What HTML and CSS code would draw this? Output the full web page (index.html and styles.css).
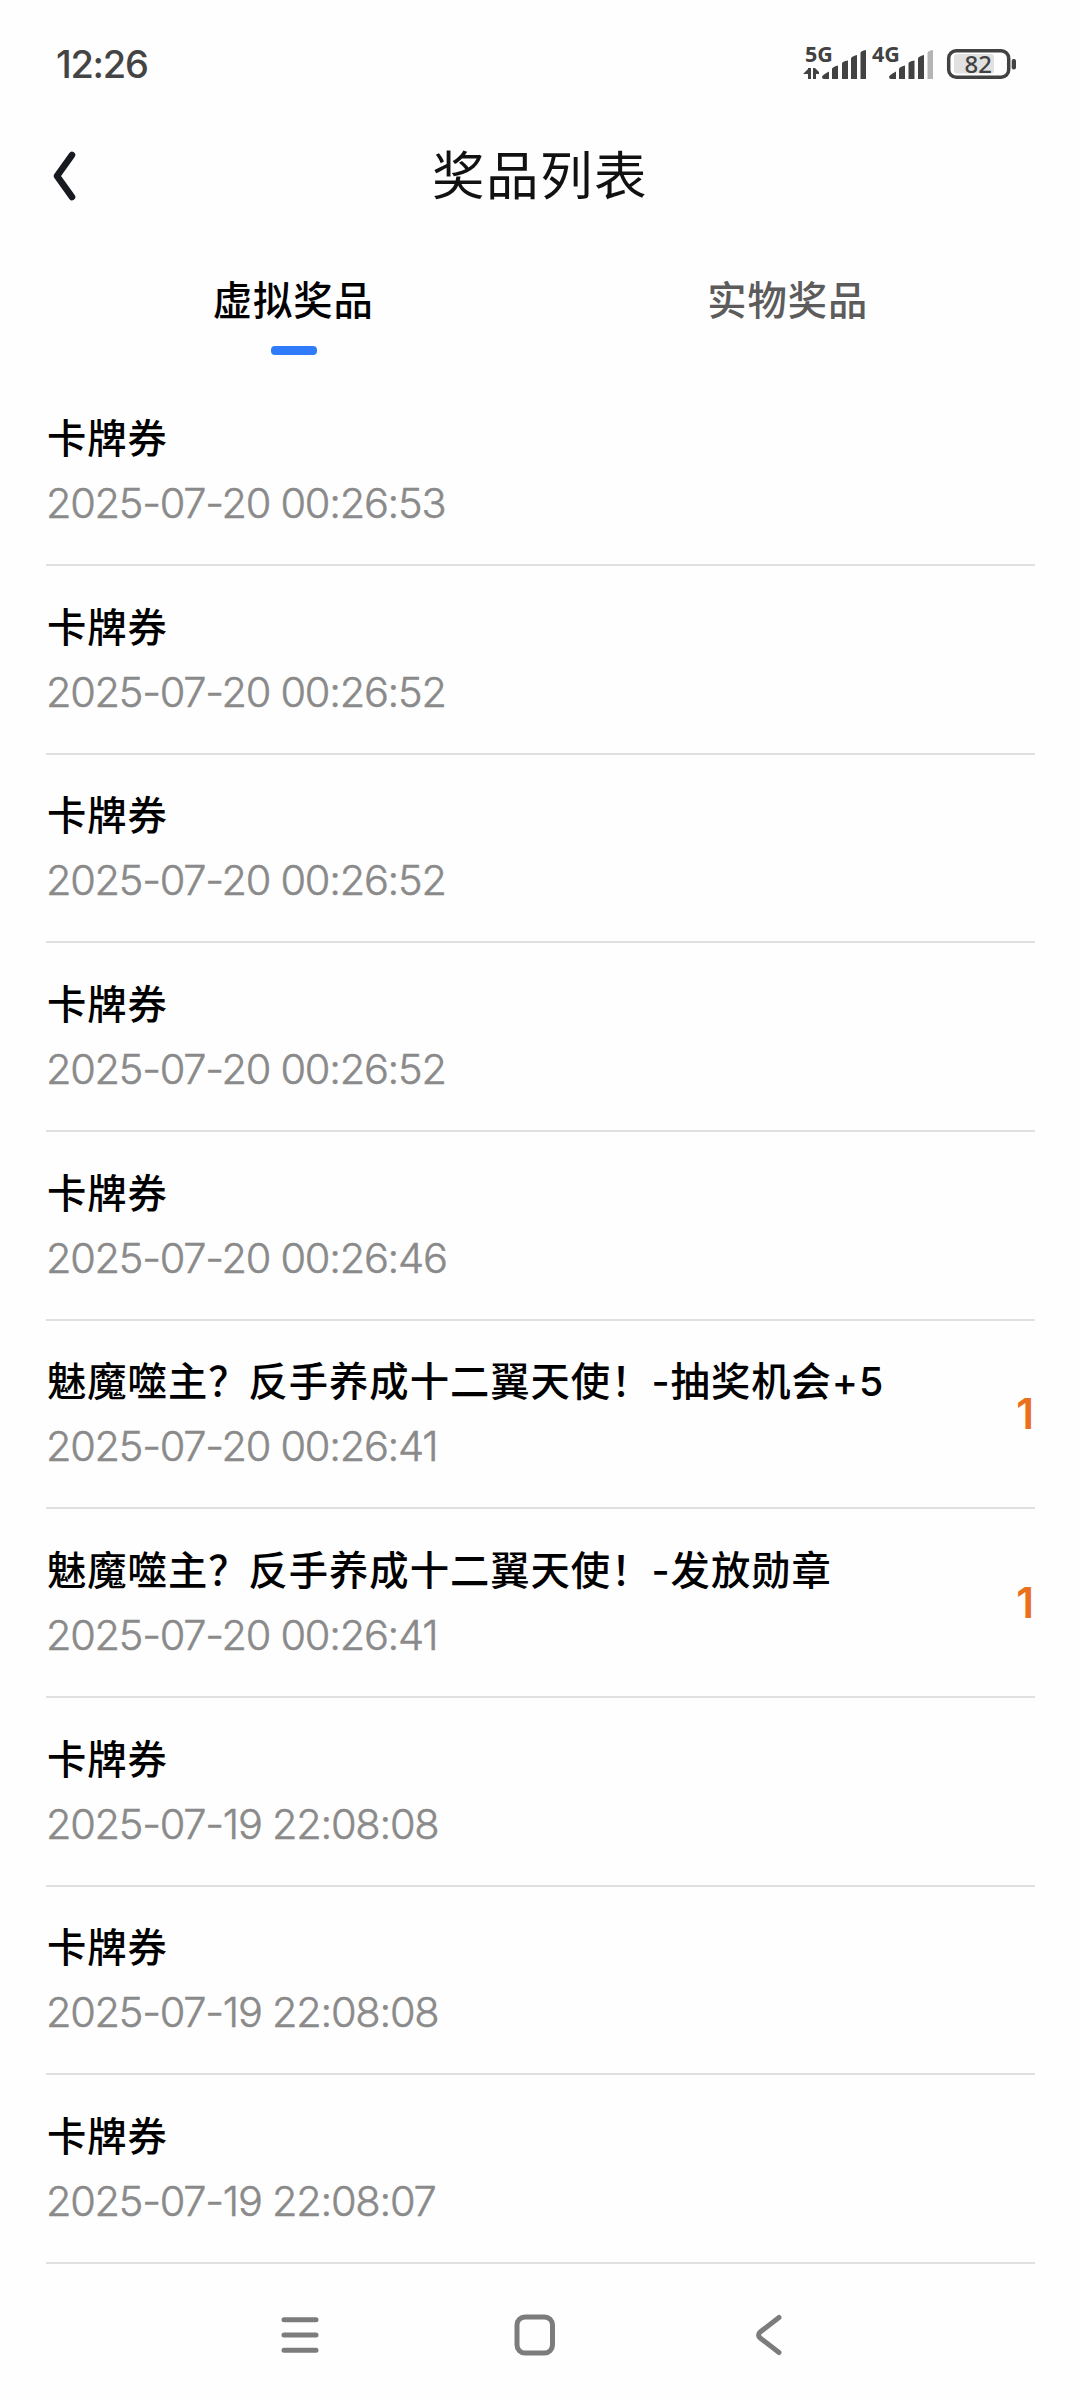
FILE: index.html
```html
<!DOCTYPE html>
<html lang="zh-CN">
    <head>
        <meta charset="utf-8">
        <title>奖品列表</title>
        <link rel="stylesheet" href="styles.css">
    </head>
    <body>
        <div class="status-bar">
            <span class="clock">12:26</span>
            <svg class="status-icons" width="220" height="60" viewBox="800 34 220 60">
                <!-- first sim -->
                <text class="net" x="805" y="62">5G</text>
                <path d="M803 74L808 69V68H811V79H808V74ZM813 68H815L819 72V74H816V79H813Z"/>
                <path d="M822 77Q822 75 829 71.500V79H824Q822 79 822 77ZM832 69Q832 67 838 65.500V79H832ZM842 63.500Q842 61.500 848 60.500V79H842ZM851 58.500Q851 56.500 857 55V79H851ZM860.500 53Q860.500 51 866 50V79H860.500Z"/>
                <!-- second sim -->
                <text class="net" x="872" y="62">4G</text>
                <path d="M889 77Q889 75 896 71.500V79H891Q889 79 889 77ZM899 69Q899 67 905 65.500V79H899ZM908.500 63.500Q908.500 61.500 914.500 60.500V79H908.500ZM918 58.500Q918 56.500 924 55V79H918Z"/>
                <path class="bar-off" d="M927.500 53Q927.500 51 933 50V79H927.500Z"/>
                <!-- battery -->
                <rect class="cell" x="948.700" y="50.700" width="60" height="26.600" rx="7.500"/>
                <rect class="charge" x="954" y="54" width="40" height="19.500" rx="3"/>
                <rect x="1011.700" y="59" width="4.300" height="10.500" rx="2"/>
                <text class="level" x="964.500" y="73">82</text>
            </svg>
        </div>

        <div class="header">
            <svg class="back" width="24" height="52" viewBox="0 0 24 52">
                <path d="M20 5L5 26L20 47"/>
            </svg>
            <h1>奖品列表</h1>
        </div>

        <div class="tabs">
            <div class="tab active">虚拟奖品</div>
            <div class="tab">实物奖品</div>
        </div>

        <div class="list">
            <div class="row">
                <div>
                    <div class="name">卡牌券</div>
                    <div class="time">2025-07-20 00:26:53</div>
                </div>
            </div>
            <div class="row">
                <div>
                    <div class="name">卡牌券</div>
                    <div class="time">2025-07-20 00:26:52</div>
                </div>
            </div>
            <div class="row">
                <div>
                    <div class="name">卡牌券</div>
                    <div class="time">2025-07-20 00:26:52</div>
                </div>
            </div>
            <div class="row">
                <div>
                    <div class="name">卡牌券</div>
                    <div class="time">2025-07-20 00:26:52</div>
                </div>
            </div>
            <div class="row">
                <div>
                    <div class="name">卡牌券</div>
                    <div class="time">2025-07-20 00:26:46</div>
                </div>
            </div>
            <div class="row">
                <div>
                    <div class="name">魅魔噬主？反手养成十二翼天使！-抽奖机会+5</div>
                    <div class="time">2025-07-20 00:26:41</div>
                </div>
                <div class="count">1</div>
            </div>
            <div class="row">
                <div>
                    <div class="name">魅魔噬主？反手养成十二翼天使！-发放勋章</div>
                    <div class="time">2025-07-20 00:26:41</div>
                </div>
                <div class="count">1</div>
            </div>
            <div class="row">
                <div>
                    <div class="name">卡牌券</div>
                    <div class="time">2025-07-19 22:08:08</div>
                </div>
            </div>
            <div class="row">
                <div>
                    <div class="name">卡牌券</div>
                    <div class="time">2025-07-19 22:08:08</div>
                </div>
            </div>
            <div class="row">
                <div>
                    <div class="name">卡牌券</div>
                    <div class="time">2025-07-19 22:08:07</div>
                </div>
            </div>
        </div>

        <div class="nav-bar">
            <svg width="44" height="44" viewBox="0 0 44 44">
                <path d="M6 6.700H38M6 22H38M6 37.300H38"/>
            </svg>
            <svg width="44" height="44" viewBox="0 0 44 44">
                <rect x="4" y="4" width="35.500" height="36" rx="8"/>
            </svg>
            <svg width="44" height="44" viewBox="0 0 44 44">
                <path d="M31 4.500L12.500 18.700Q8.500 22 12.500 25.300L31 39.500"/>
            </svg>
        </div>
    </body>
</html>
```

FILE: styles.css
```css
*{
    box-sizing:border-box;
}
body{
    margin:0;
    height:2400px;
    display:flex;
    flex-direction:column;
    background-color:#fefefe;
    color:#000;
    font-family:Inter, "Noto Sans CJK SC", sans-serif;
    overflow:hidden;
}
.status-bar{
    height:128px;
    padding:0 60px 0 56px;
    display:flex;
    justify-content:space-between;
    align-items:center;
}
.clock{
    font-size:38px;
    font-weight:500;
    letter-spacing:-1.3px;
    color:#444;
}
.status-icons{
    fill:#424242;
}
.net{
    font:bold 21.5px "Noto Sans", sans-serif;
}
.level{
    font:500 24px "Noto Sans", sans-serif;
}
.bar-off{
    fill:#b5b5b5;
}
.cell{
    fill:none;
    stroke:#424242;
    stroke-width:3.5;
}
.charge{
    fill:#e1e1e1;
}
.header{
    height:96px;
    padding:0 52px;
    display:grid;
    grid-template-columns:24px 1fr 24px;
    align-items:center;
}
.back{
    fill:none;
    stroke:#171a20;
    stroke-width:6.500;
    stroke-linecap:round;
    stroke-linejoin:round;
}
h1{
    margin:0;
    text-align:center;
    font-size:52.5px;
    font-weight:400;
    line-height:80px;
    letter-spacing:1.5px;
    color:#111;
}
.tabs{
    height:153.5px;
    padding:45px 45px 0 46px;
    display:flex;
}
.tab{
    flex:1;
    display:flex;
    flex-direction:column;
    align-items:center;
    font-size:39.3px;
    font-weight:500;
    line-height:64px;
    letter-spacing:1px;
    color:#5c5c5c;
}
.tab.active{
    color:#000;
}
.tab.active::after{
    content:"";
    width:46px;
    height:9px;
    margin-top:13px;
    margin-left:1px;
    border-radius:4px;
    background-color:#2f7bfa;
}
.list{
    padding:0 45px 0 46px;
}
.row{
    height:188.67px;
    padding-top:29.5px;
    display:flex;
    justify-content:space-between;
    border-bottom:2px solid #e0e0e0;
}
.name{
    padding-left:1px;
    font-size:39.3px;
    font-weight:500;
    line-height:64px;
    letter-spacing:1px;
}
.time{
    font-size:41.5px;
    font-weight:300;
    line-height:64px;
    letter-spacing:-1.25px;
    color:#8a8a8a;
    -webkit-text-stroke:0.5px #8a8a8a;
}
.count{
    padding-top:32px;
    padding-right:1px;
    font-size:42px;
    font-weight:600;
    line-height:64px;
    color:#ea701d;
}
.nav-bar{
    flex:1;
    padding:6px 288px 0 278px;
    display:flex;
    justify-content:space-between;
    align-items:center;
}
.nav-bar svg{
    fill:none;
    stroke:#7c7c7c;
    stroke-width:5;
    stroke-linecap:round;
}
```
